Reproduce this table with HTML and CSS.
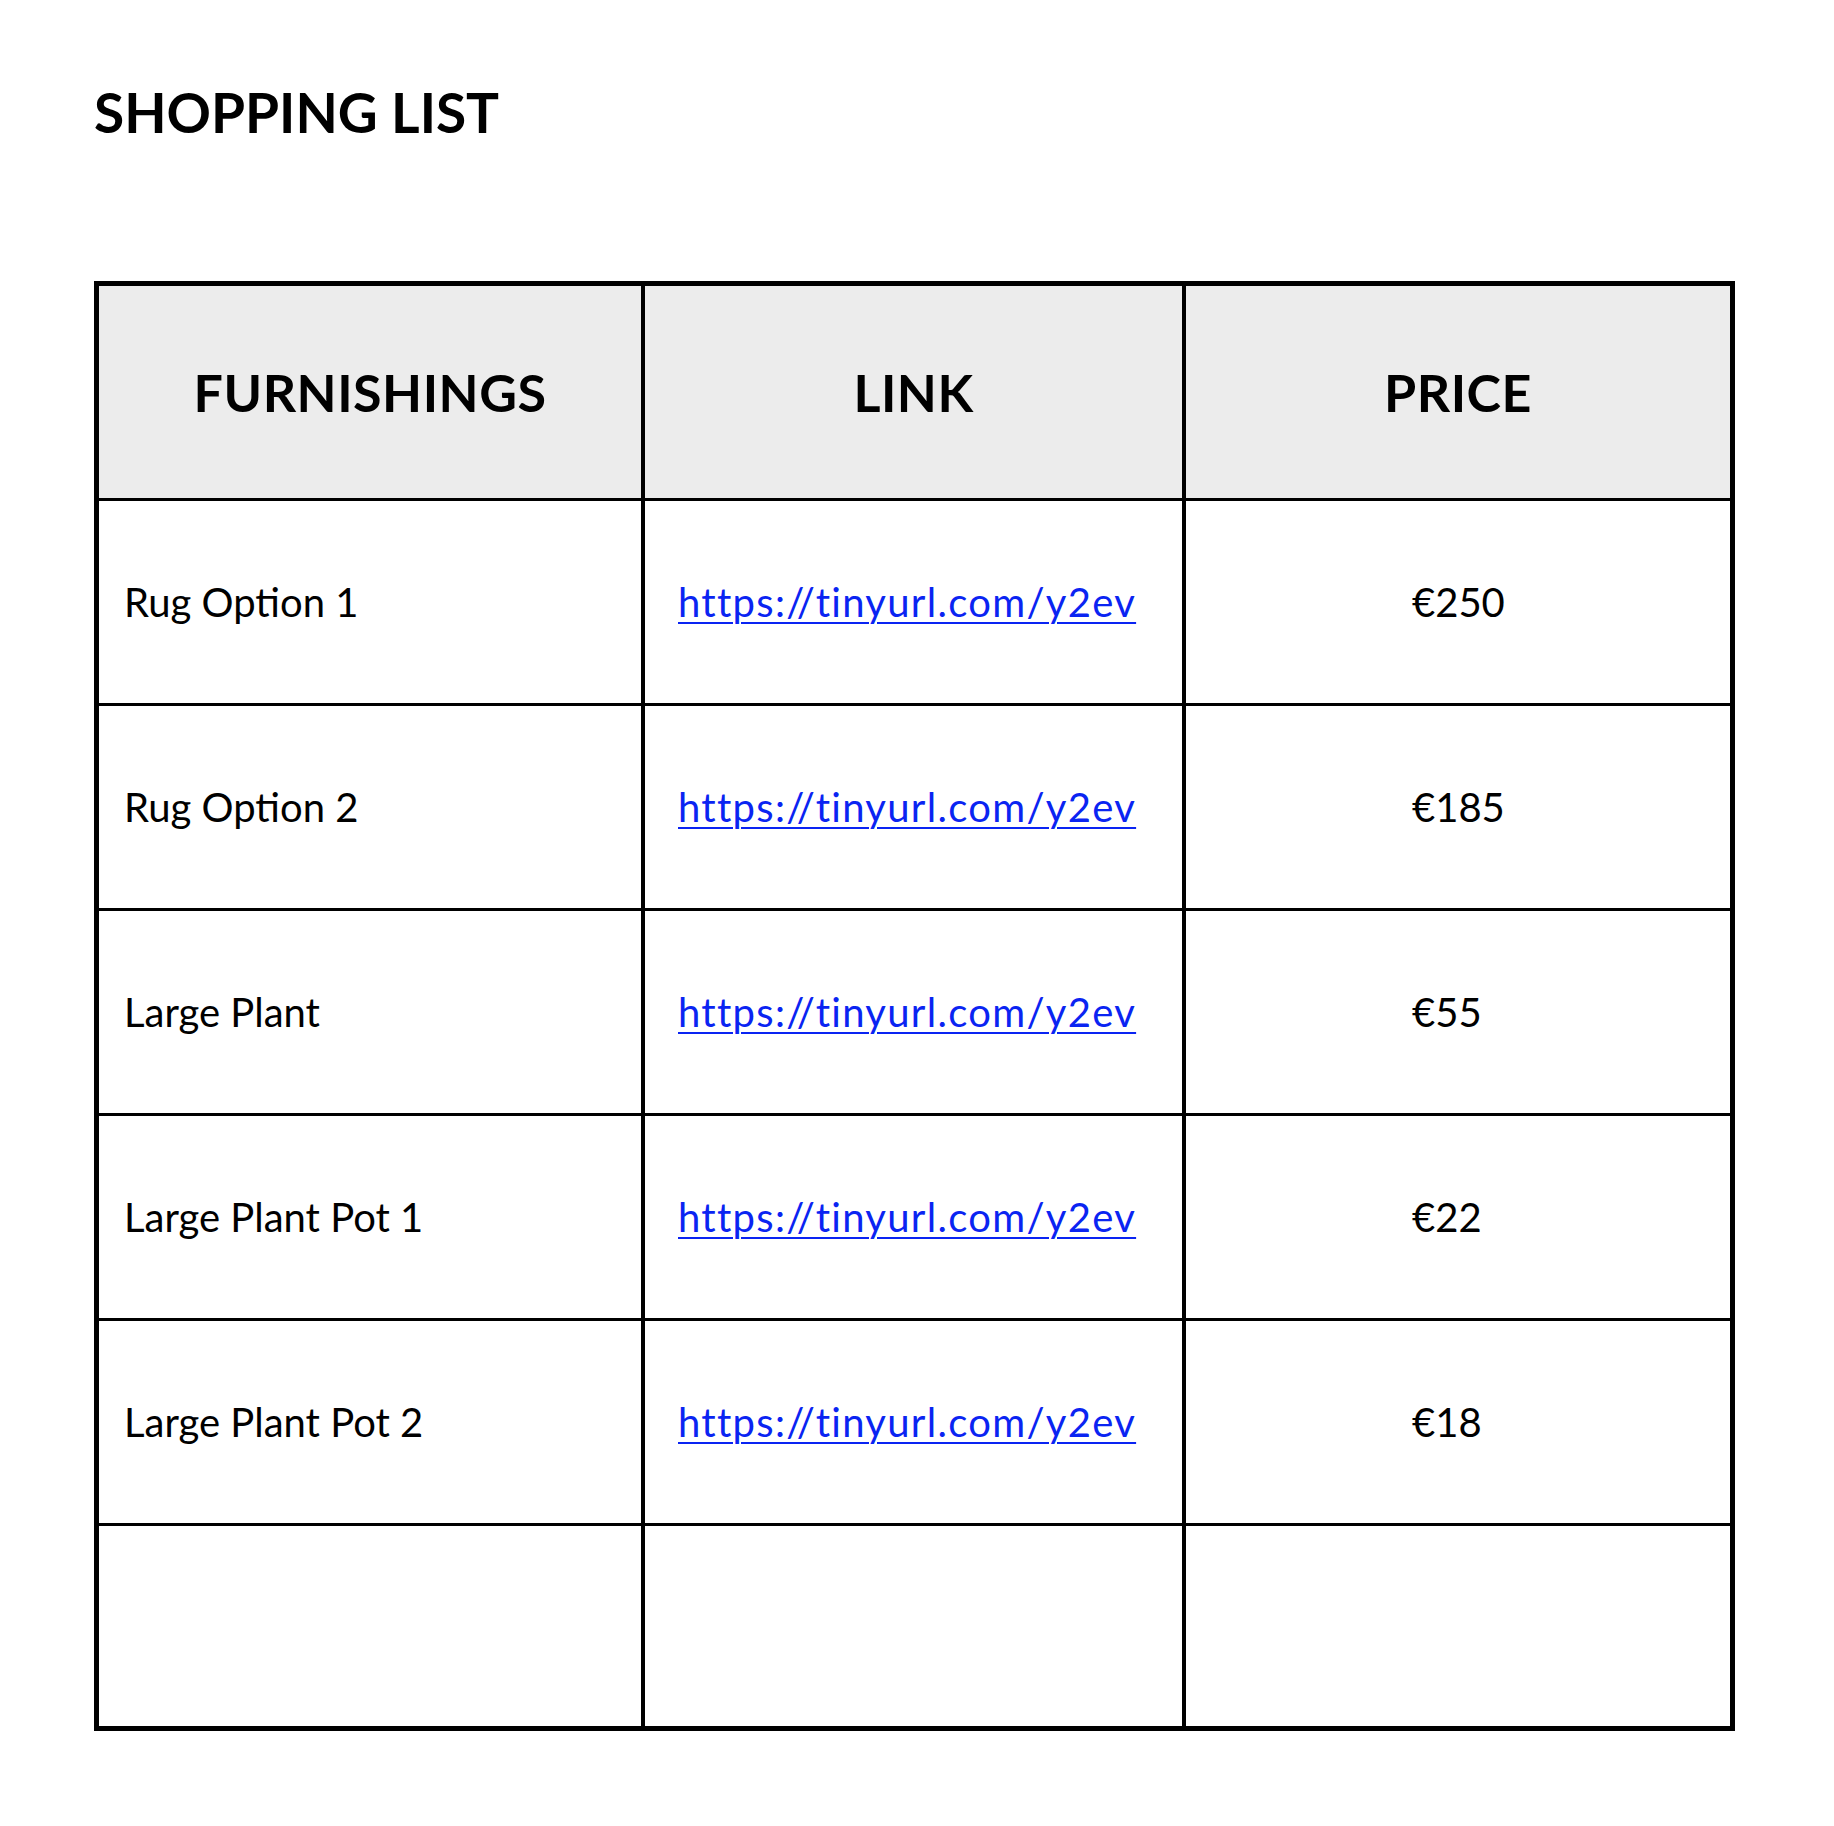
FILE: index.html
```html
<!DOCTYPE html>
<html lang="en">
<head>
<meta charset="utf-8">
<title>Shopping List</title>
<link rel="stylesheet" href="styles.css">
</head>
<body>
<main class="page">
  <h1 class="title">SHOPPING LIST</h1>
  <div class="table">
    <div class="cell head col1">FURNISHINGS</div>
    <div class="cell head col2">LINK</div>
    <div class="cell head col3">PRICE</div>

    <div class="cell item col1">Rug Option 1</div>
    <div class="cell link col2"><a href="#">https://tinyurl.com/y2ev</a></div>
    <div class="cell price col3">€250</div>

    <div class="cell item col1">Rug Option 2</div>
    <div class="cell link col2"><a href="#">https://tinyurl.com/y2ev</a></div>
    <div class="cell price col3">€185</div>

    <div class="cell item col1">Large Plant</div>
    <div class="cell link col2"><a href="#">https://tinyurl.com/y2ev</a></div>
    <div class="cell price col3">€55</div>

    <div class="cell item col1">Large Plant Pot 1</div>
    <div class="cell link col2"><a href="#">https://tinyurl.com/y2ev</a></div>
    <div class="cell price col3">€22</div>

    <div class="cell item col1">Large Plant Pot 2</div>
    <div class="cell link col2"><a href="#">https://tinyurl.com/y2ev</a></div>
    <div class="cell price col3">€18</div>

    <div class="cell empty col1 last"></div>
    <div class="cell empty col2 last"></div>
    <div class="cell empty col3 last"></div>
  </div>
</main>
</body>
</html>
```

FILE: styles.css
```css
html, body {
  margin: 0;
  padding: 0;
  background: #ffffff;
}

body {
  font-family: Lato, "Liberation Sans", Arial, sans-serif;
  color: #000000;
}

.page {
  padding: 85px 93px 0 94px;
  display: flex;
  flex-direction: column;
}

.title {
  margin: 0 0 141px 0;
  font-size: 55px;
  line-height: 55px;
  font-weight: 700;
  letter-spacing: 0;
}

.table {
  display: grid;
  grid-template-columns: 546px 541px 544px;
  grid-template-rows: 215px repeat(5, 205px) 200px;
  border: 5px solid #000000;
  width: 1631px;
}

.cell {
  display: flex;
  align-items: center;
  border-bottom: 3px solid #000000;
  box-sizing: border-box;
  min-width: 0;
}

.cell.last {
  border-bottom: none;
}

.col1, .col2 {
  border-right: 4px solid #000000;
}

.head {
  background: #ececec;
  justify-content: center;
  font-size: 52px;
  font-weight: 700;
  letter-spacing: 0.5px;
}

.item {
  padding-left: 25px;
  font-size: 40px;
  font-weight: 400;
}

.link {
  padding-left: 33px;
  font-size: 40px;
  letter-spacing: 1.3px;
}

.link a {
  color: #0a24f2;
  text-decoration: underline;
  text-decoration-thickness: 2px;
  text-underline-offset: 5px;
}

.price {
  padding-left: 226px;
  font-size: 40px;
}
```
